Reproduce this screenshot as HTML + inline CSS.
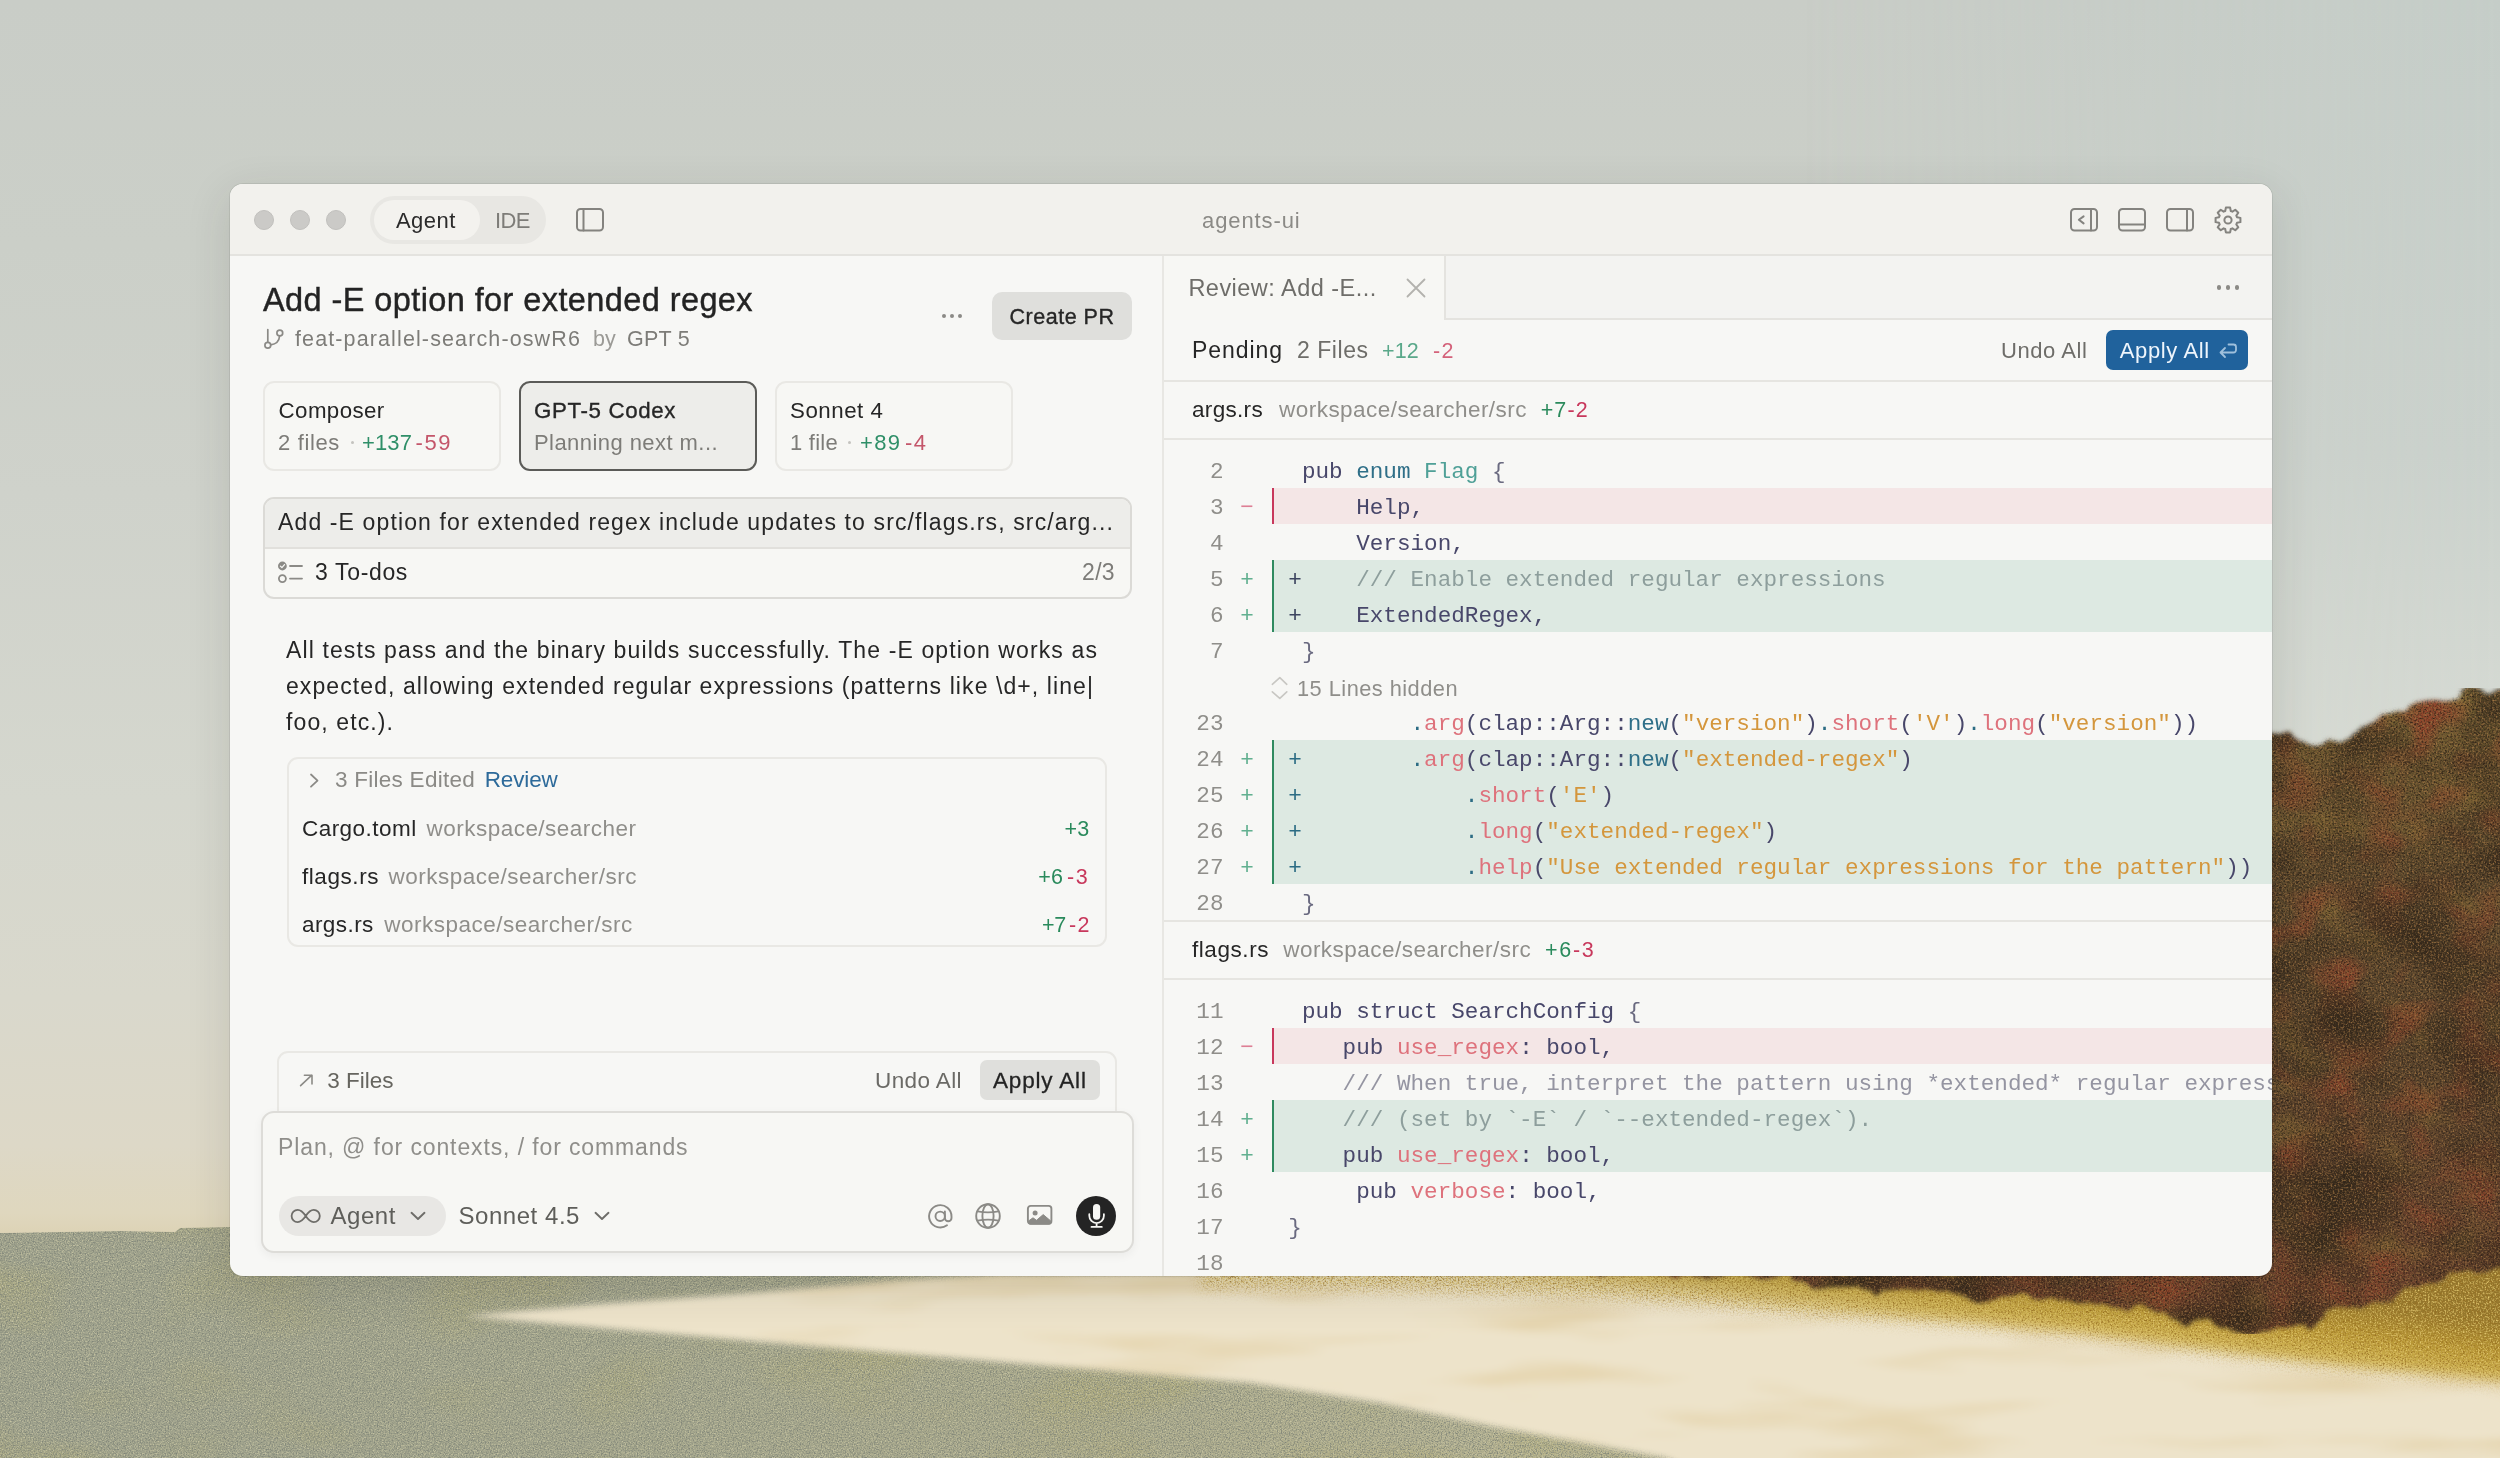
<!DOCTYPE html>
<html lang="en">
<head>
<meta charset="utf-8">
<title>agents-ui</title>
<style>
*{box-sizing:border-box;margin:0;padding:0}
html,body{width:2500px;height:1458px;overflow:hidden;background:#c9cdc6}
body{position:relative;font-family:"Liberation Sans",Arial,sans-serif;color:#262626}
.abs{position:absolute}
#bg{position:absolute;left:0;top:0;width:2500px;height:1458px}
#shadow{position:absolute;left:230px;top:184px;width:2042px;height:1092px;border-radius:13px;box-shadow:0 12px 44px 2px rgba(40,40,30,.12),0 0 0 1px rgba(0,0,0,.07)}
#win{position:absolute;left:230px;top:184px;width:2042px;height:1092px;border-radius:13px;background:#f7f7f5;overflow:hidden}
#pg{position:absolute;left:-230px;top:-184px;width:2500px;height:1458px;will-change:transform}
.t{position:absolute;white-space:pre;line-height:1}
.t b{font-weight:normal}
svg.ic{position:absolute;overflow:visible;fill:none;stroke:#84837f;stroke-width:2;stroke-linecap:round;stroke-linejoin:round}
.g{color:#2f8f68}.r{color:#c4566a}
</style>
</head>
<body>
<svg id="bg" viewBox="0 0 2500 1458" width="2500" height="1458" preserveAspectRatio="none">
<defs>
<linearGradient id="gsky" x1="0" y1="0" x2="0" y2="1232" gradientUnits="userSpaceOnUse">
<stop offset="0" stop-color="#c9cdc7"/><stop offset=".2" stop-color="#cbcfc8"/><stop offset=".4" stop-color="#cfd2cb"/><stop offset=".65" stop-color="#d5d7ce"/><stop offset=".81" stop-color="#d9d8cc"/><stop offset=".93" stop-color="#ddd8c7"/><stop offset=".985" stop-color="#dfd7be"/><stop offset="1" stop-color="#ddd3b6"/>
</linearGradient>
<linearGradient id="gskyr" x1="0" y1="0" x2="0" y2="760" gradientUnits="userSpaceOnUse">
<stop offset="0" stop-color="#c5cdc8"/><stop offset=".6" stop-color="#cad1cc"/><stop offset="1" stop-color="#d7dbd4"/>
</linearGradient>
<linearGradient id="gskyrm" x1="1800" y1="0" x2="2500" y2="0" gradientUnits="userSpaceOnUse">
<stop offset="0" stop-color="#fff" stop-opacity="0"/><stop offset="1" stop-color="#fff" stop-opacity="1"/>
</linearGradient>
<mask id="mr"><rect x="1800" y="0" width="700" height="800" fill="url(#gskyrm)"/></mask>
<linearGradient id="gsea" x1="0" y1="0" x2="2500" y2="0" gradientUnits="userSpaceOnUse">
<stop offset="0" stop-color="#9fa28d"/><stop offset=".25" stop-color="#a3a58c"/><stop offset=".45" stop-color="#abaa8b"/><stop offset=".62" stop-color="#b6b393"/><stop offset="1" stop-color="#bbb693"/>
</linearGradient>
<linearGradient id="gbush" x1="0" y1="690" x2="0" y2="1320" gradientUnits="userSpaceOnUse">
<stop offset="0" stop-color="#80703a"/><stop offset=".08" stop-color="#6e5a30"/><stop offset=".3" stop-color="#5c4a2e"/><stop offset=".6" stop-color="#57432c"/><stop offset=".85" stop-color="#61402c"/><stop offset="1" stop-color="#6c402c"/>
</linearGradient>
<linearGradient id="ggrass" x1="2272" y1="1292" x2="2262" y2="1372" gradientUnits="userSpaceOnUse">
<stop offset="0" stop-color="#94762c"/><stop offset=".4" stop-color="#b99733"/><stop offset=".72" stop-color="#d0b455"/><stop offset="1" stop-color="#e9dcb2"/>
</linearGradient>
<filter id="fgrain" color-interpolation-filters="sRGB" x="0" y="0" width="100%" height="100%">
<feTurbulence type="fractalNoise" baseFrequency=".75" numOctaves="2" seed="7" result="n"/>
<feColorMatrix in="n" type="matrix" values="0 0 0 0 .78  0 0 0 0 .77  0 0 0 0 .64  2.6 0 0 0 -1.15" result="lite"/>
<feColorMatrix in="n" type="matrix" values="0 0 0 0 .50  0 0 0 0 .52  0 0 0 0 .47  0 2.6 0 0 -1.12" result="dk"/>
<feTurbulence type="fractalNoise" baseFrequency=".006 .012" numOctaves="2" seed="3" result="b"/>
<feColorMatrix in="b" type="matrix" values="0 0 0 0 .70  0 0 0 0 .67  0 0 0 0 .42  1.6 0 0 0 -.80" result="oliv"/>
<feMerge result="m"><feMergeNode in="SourceGraphic"/><feMergeNode in="oliv"/><feMergeNode in="lite"/><feMergeNode in="dk"/></feMerge>
<feComposite in="m" in2="SourceGraphic" operator="in"/>
</filter>
<filter id="fbush" color-interpolation-filters="sRGB" x="0" y="0" width="100%" height="100%">
<feTurbulence type="fractalNoise" baseFrequency=".011 .013" numOctaves="3" seed="11" result="big"/>
<feColorMatrix in="big" type="matrix" values="0 0 0 0 .22  0 0 0 0 .17  0 0 0 0 .11  2.2 1.2 0 0 -1.4" result="dark"/>
<feTurbulence type="fractalNoise" baseFrequency=".022 .026" numOctaves="2" seed="23" result="mid"/>
<feColorMatrix in="mid" type="matrix" values="0 0 0 0 .56  0 0 0 0 .27  0 0 0 0 .17  0 2.4 1.2 0 -1.72" result="red"/>
<feColorMatrix in="mid" type="matrix" values="0 0 0 0 .52  0 0 0 0 .42  0 0 0 0 .2  2.2 0 0 0 -1.2" result="ochre"/>
<feTurbulence type="fractalNoise" baseFrequency=".55" numOctaves="2" seed="5" result="fine"/>
<feColorMatrix in="fine" type="matrix" values="0 0 0 0 .18  0 0 0 0 .13  0 0 0 0 .09  2.4 0 0 0 -1.0" result="fg"/>
<feColorMatrix in="fine" type="matrix" values="0 0 0 0 .62  0 0 0 0 .45  0 0 0 0 .26  0 2.4 0 0 -1.12" result="fl"/>
<feMerge result="m"><feMergeNode in="SourceGraphic"/><feMergeNode in="ochre"/><feMergeNode in="red"/><feMergeNode in="dark"/><feMergeNode in="fg"/><feMergeNode in="fl"/></feMerge>
<feComposite in="m" in2="SourceGraphic" operator="in"/>
</filter>
<filter id="fedge" color-interpolation-filters="sRGB" x="-5%" y="-5%" width="110%" height="110%">
<feTurbulence type="fractalNoise" baseFrequency=".03" numOctaves="3" seed="4" result="t"/>
<feDisplacementMap in="SourceGraphic" in2="t" scale="26" xChannelSelector="R" yChannelSelector="G" result="dm"/><feGaussianBlur in="dm" stdDeviation="2.2"/>
</filter>
<filter id="fsand" color-interpolation-filters="sRGB" x="0" y="0" width="100%" height="100%">
<feTurbulence type="fractalNoise" baseFrequency=".004 .03" numOctaves="3" seed="9" result="s"/>
<feColorMatrix in="s" type="matrix" values="0 0 0 0 .88  0 0 0 0 .80  0 0 0 0 .62  2.2 0 0 0 -1.1" result="st"/>
<feMerge result="m"><feMergeNode in="SourceGraphic"/><feMergeNode in="st"/></feMerge>
<feComposite in="m" in2="SourceGraphic" operator="in" result="c"/>
<feGaussianBlur in="c" stdDeviation="3"/>
</filter>
<filter id="fgrass" color-interpolation-filters="sRGB" x="-2%" y="-20%" width="104%" height="140%">
<feGaussianBlur in="SourceGraphic" stdDeviation="7" result="bl"/>
<feTurbulence type="fractalNoise" baseFrequency=".6" numOctaves="2" seed="15" result="n"/>
<feColorMatrix in="n" type="matrix" values="0 0 0 0 .58  0 0 0 0 .42  0 0 0 0 .12  2.4 0 0 0 -1.05" result="d"/>
<feColorMatrix in="n" type="matrix" values="0 0 0 0 .9  0 0 0 0 .8  0 0 0 0 .45  0 2.4 0 0 -1.1" result="l"/>
<feMerge result="m"><feMergeNode in="bl"/><feMergeNode in="d"/><feMergeNode in="l"/></feMerge>
<feComposite in="m" in2="bl" operator="in"/>
</filter>
<filter id="fblur6" color-interpolation-filters="sRGB"><feGaussianBlur stdDeviation="7"/></filter>
<filter id="fblur2" color-interpolation-filters="sRGB"><feGaussianBlur stdDeviation="2"/></filter>
</defs>
<rect width="2500" height="1458" fill="url(#gsky)"/>
<rect x="1800" width="700" height="800" fill="url(#gskyr)" mask="url(#mr)"/>
<!-- sea -->
<path d="M0 1233 L120 1231 L175 1232 L180 1228 L230 1227 L1400 1215 L2500 1215 V1458 H0Z" fill="url(#gsea)" filter="url(#fgrain)"/>
<!-- sand -->
<g filter="url(#fsand)">
<path d="M462 1316 L600 1304 L750 1293 L900 1280 L1000 1274 L2600 1262 V1560 H1900 L1665 1458 L1500 1428 L1380 1403 L1250 1383 L1000 1362 L750 1341 L600 1328Z" fill="#ede3ca"/>
</g>
<!-- grass -->
<g filter="url(#fgrass)">
<path d="M1200 1262 L2600 1236 V1392 L2500 1384 L2360 1372 L2220 1356 L2080 1337 L1940 1325 L1800 1315 L1700 1306 L1600 1298 L1400 1291 L1200 1288Z" fill="url(#ggrass)"/>
</g>
<!-- bush -->
<g filter="url(#fbush)">
<path filter="url(#fedge)" d="M1560 1268 L1750 1278 L1850 1288 L1950 1296 L2050 1300 L2150 1307 L2200 1324 L2250 1334 L2290 1330 L2330 1316 L2380 1303 L2420 1286 L2450 1275 L2500 1268 L2560 1266 V690 L2470 688 L2440 698 L2400 712 L2365 728 L2335 745 L2300 738 L2272 730 L2200 730 V1268Z" fill="url(#gbush)"/>
</g>
</svg>
<div id="shadow"></div>
<div id="win"><div id="pg">
<div class="abs" id="tbar" style="left:230px;top:184px;width:2042px;height:72px;background:#f2f1ed;border-bottom:2px solid #e4e3df"></div>
<div class="abs" style="left:254px;top:210px;width:20px;height:20px;border-radius:50%;background:#cbcac7;border:1px solid #c1c0bd"></div>
<div class="abs" style="left:290px;top:210px;width:20px;height:20px;border-radius:50%;background:#cbcac7;border:1px solid #c1c0bd"></div>
<div class="abs" style="left:326px;top:210px;width:20px;height:20px;border-radius:50%;background:#cbcac7;border:1px solid #c1c0bd"></div>
<div class="abs" id="seg" style="left:370px;top:196px;width:176px;height:48px;border-radius:24px;background:#e8e7e3"></div>
<div class="abs" id="segA" style="left:374px;top:200px;width:106px;height:40px;border-radius:20px;background:#f3f2ee"></div>
<div class="t" id="tAgent" style="top:210.30px;font-size:22px;color:#2b2b2b;left:396px;letter-spacing:0.45px;">Agent</div>
<div class="t" id="tIDE" style="top:210.30px;font-size:22px;color:#7d7c78;left:495px;letter-spacing:-0.6px;">IDE</div>
<svg class="ic" style="left:575px;top:207px;" width="30" height="26" viewBox="0 0 30 26"><rect x="2" y="2" width="26" height="21.5" rx="3.5"/><path d="M8.5 2V23.5"/></svg>
<div class="t" id="tTitle" style="top:210.30px;font-size:22px;color:#8b8a86;left:1202px;letter-spacing:0.9px;">agents-ui</div>
<svg class="ic" style="left:2069px;top:207px;" width="30" height="26" viewBox="0 0 30 26"><rect x="2" y="2" width="26" height="21.5" rx="3.5"/><path d="M22 2V23.5M14.600 9.400L9.900 12.800L14.600 16.400"/></svg>
<svg class="ic" style="left:2117px;top:207px;" width="30" height="26" viewBox="0 0 30 26"><rect x="2" y="2" width="26" height="21.5" rx="3.5"/><path d="M2 17.5H28"/></svg>
<svg class="ic" style="left:2165px;top:207px;" width="30" height="26" viewBox="0 0 30 26"><rect x="2" y="2" width="26" height="21.5" rx="3.5"/><path d="M22 2V23.5"/></svg>
<svg class="ic" style="left:2214px;top:206px;" width="28" height="28" viewBox="-14 -14 28 28"><circle r="3.6"/><path d="M-2.78 -8.98 L-2.13 -12.42 L2.13 -12.42 L2.78 -8.98 L4.39 -8.31 L7.27 -10.29 L10.29 -7.27 L8.31 -4.39 L8.98 -2.78 L12.42 -2.13 L12.42 2.13 L8.98 2.78 L8.31 4.39 L10.29 7.27 L7.27 10.29 L4.39 8.31 L2.78 8.98 L2.13 12.42 L-2.13 12.42 L-2.78 8.98 L-4.39 8.31 L-7.27 10.29 L-10.29 7.27 L-8.31 4.39 L-8.98 2.78 L-12.42 2.13 L-12.42 -2.13 L-8.98 -2.78 L-8.31 -4.39 L-10.29 -7.27 L-7.27 -10.29 L-4.39 -8.31Z"/></svg>
<div class="abs" style="left:1162px;top:256px;width:2px;height:1020px;background:#e8e7e3"></div>
<div class="t" id="lTitle" style="top:284.15px;font-size:32.5px;color:#232323;left:263px;letter-spacing:0.407px;-webkit-text-stroke:0.4px #232323;">Add -E option for extended regex</div>
<svg class="ic" style="left:262px;top:326px;stroke:#8b8a86;stroke-width:1.7" width="24" height="24" viewBox="0 0 24 24"><circle cx="5.800" cy="19.200" r="2.900"/><circle cx="17.800" cy="7" r="2.900"/><path d="M5.800 3.500V16.200M8.700 18.800C14 18.200 17.200 15 17.600 10"/></svg>
<div class="t" id="lBranch" style="top:329.05px;font-size:21.5px;color:#7d7c78;left:295px;letter-spacing:1.118px;">feat-parallel-search-oswR6</div>
<div class="t" id="lBy" style="top:329.05px;font-size:21.5px;color:#9b9a96;left:593px;letter-spacing:0.141px;">by</div>
<div class="t" id="lGpt" style="top:329.05px;font-size:21.5px;color:#7d7c78;left:627px;letter-spacing:0.25px;">GPT 5</div>
<div class="abs" style="left:941.7px;top:313.6px;width:4.6px;height:4.6px;border-radius:50%;background:#8b8a86"></div>
<div class="abs" style="left:949.7px;top:313.6px;width:4.6px;height:4.6px;border-radius:50%;background:#8b8a86"></div>
<div class="abs" style="left:957.9000000000001px;top:313.6px;width:4.6px;height:4.6px;border-radius:50%;background:#8b8a86"></div>
<div class="abs" style="left:992px;top:292px;width:140px;height:48px;border-radius:10px;background:#dfdfdc"></div>
<div class="t" id="lCreate" style="top:307.05px;font-size:21.5px;color:#262626;left:1009.5px;letter-spacing:0.514px;-webkit-text-stroke:0.35px #262626;">Create PR</div>
<div class="abs" style="left:263px;top:381px;width:238px;height:90px;border-radius:11px;background:#f7f7f4;border:2px solid #e9e8e4"></div>
<div class="abs" style="left:519px;top:381px;width:238px;height:90px;border-radius:11px;background:#ededea;border:2px solid #5b5b58"></div>
<div class="abs" style="left:775px;top:381px;width:238px;height:90px;border-radius:11px;background:#f7f7f4;border:2px solid #e9e8e4"></div>
<div class="t" id="c1a" style="top:400.35px;font-size:22.3px;color:#262626;left:278.6px;letter-spacing:0.393px;">Composer</div>
<div class="t" id="c1b" style="top:431.90px;font-size:22px;color:#7d7c78;left:278px;letter-spacing:0.645px;">2 files</div>
<div class="abs" style="left:350.5px;top:440.5px;width:3px;height:3px;border-radius:50%;background:#c4c3bf"></div>
<div class="t" id="c1c" style="top:431.90px;font-size:22px;color:#2f8f68;left:362px;letter-spacing:0.109px;">+137</div>
<div class="t" id="c1d" style="top:431.90px;font-size:22px;color:#c4566a;left:415.5px;letter-spacing:1.568px;">-59</div>
<div class="t" id="c2a" style="top:400.35px;font-size:22.3px;color:#262626;left:534px;letter-spacing:0.629px;-webkit-text-stroke:0.35px #262626;">GPT-5 Codex</div>
<div class="t" id="c2b" style="top:431.90px;font-size:22px;color:#7d7c78;left:534px;letter-spacing:0.438px;">Planning next m...</div>
<div class="t" id="c3a" style="top:400.35px;font-size:22.3px;color:#262626;left:790px;letter-spacing:0.529px;">Sonnet 4</div>
<div class="t" id="c3b" style="top:431.90px;font-size:22px;color:#7d7c78;left:790px;letter-spacing:0.253px;">1 file</div>
<div class="abs" style="left:848px;top:440.5px;width:3px;height:3px;border-radius:50%;background:#c4c3bf"></div>
<div class="t" id="c3c" style="top:431.90px;font-size:22px;color:#2f8f68;left:860px;letter-spacing:1.391px;">+89</div>
<div class="t" id="c3d" style="top:431.90px;font-size:22px;color:#c4566a;left:905px;letter-spacing:1.469px;">-4</div>
<div class="abs" style="left:263px;top:497px;width:869px;height:102px;border-radius:11px;background:#f7f7f4;border:2px solid #dbdad6;overflow:hidden"><div class="abs" style="left:0;top:0;width:100%;height:50px;background:#ededea;border-bottom:2px solid #e1e0dc"></div></div>
<div class="t" id="pTxt" style="top:510.80px;font-size:23px;color:#262626;left:278px;letter-spacing:1.125px;">Add -E option for extended regex include updates to src/flags.rs, src/arg...</div>
<svg class="ic" style="left:277px;top:559px;stroke:#8b8a86;stroke-width:1.8" width="28" height="28" viewBox="0 0 28 28"><circle cx="5.400" cy="7" r="4.400" fill="#8b8a86" stroke="none"/><path d="M3.400 7.100l1.500 1.500L7.500 5.600" stroke="#f7f7f4" stroke-width="1.300"/><circle cx="5.400" cy="19.600" r="3.500"/><path d="M13 7H25M13 19.600H25"/></svg>
<div class="t" id="pTodo" style="top:560.80px;font-size:23px;color:#262626;left:315px;letter-spacing:0.648px;">3 To-dos</div>
<div class="t" id="pCnt" style="top:560.80px;font-size:23px;color:#7d7c78;right:1385px;letter-spacing:0.339px;">2/3</div>
<div class="t" id="m1" style="top:639.30px;font-size:23px;color:#262626;left:286px;letter-spacing:1.118px;">All tests pass and the binary builds successfully. The -E option works as</div>
<div class="t" id="m2" style="top:675.30px;font-size:23px;color:#262626;left:286px;letter-spacing:1.082px;">expected, allowing extended regular expressions (patterns like \d+, line|</div>
<div class="t" id="m3" style="top:711.30px;font-size:23px;color:#262626;left:286px;letter-spacing:1.102px;">foo, etc.).</div>
<div class="abs" style="left:287px;top:757px;width:820px;height:190px;border-radius:11px;border:2px solid #e9e8e4"></div>
<svg class="ic" style="left:308px;top:772px;stroke:#8b8a86;stroke-width:1.8" width="14" height="18" viewBox="0 0 14 18"><path d="M3 2.5L9.5 8.6L3 14.7"/></svg>
<div class="t" id="fHead" style="top:769.05px;font-size:22.5px;color:#8b8a86;left:335px;letter-spacing:0.262px;">3 Files Edited</div>
<div class="t" id="fRev" style="top:769.05px;font-size:22.5px;color:#2d6a9a;left:484.7px;letter-spacing:-0.13px;">Review</div>
<div class="t" id="f1n" style="top:818.05px;font-size:22.5px;color:#262626;left:302px;letter-spacing:0.455px;">Cargo.toml</div>
<div class="t" id="f1p" style="top:818.05px;font-size:22.5px;color:#8f8e8a;left:426.5px;letter-spacing:0.481px;">workspace/searcher</div>
<div class="t" id="f1s" style="top:819.05px;font-size:21.5px;color:#262626;right:1410.5px;letter-spacing:0.242px;"><span style="color:#2a8a5c">+3</span></div>
<div class="t" id="f2n" style="top:866.05px;font-size:22.5px;color:#262626;left:302px;letter-spacing:0.559px;">flags.rs</div>
<div class="t" id="f2p" style="top:866.05px;font-size:22.5px;color:#8f8e8a;left:388.6px;letter-spacing:0.491px;">workspace/searcher/src</div>
<div class="t" id="f2s" style="top:867.05px;font-size:21.5px;color:#262626;left:1038.3px;letter-spacing:0.242px;"><span style="color:#2a8a5c">+6</span></div>
<div class="t" id="f2t" style="top:867.05px;font-size:21.5px;color:#262626;left:1067px;letter-spacing:1.688px;"><span style="color:#c8385c">-3</span></div>
<div class="t" id="f3n" style="top:913.55px;font-size:22.5px;color:#262626;left:302px;letter-spacing:0.433px;">args.rs</div>
<div class="t" id="f3p" style="top:913.55px;font-size:22.5px;color:#8f8e8a;left:384.3px;letter-spacing:0.491px;">workspace/searcher/src</div>
<div class="t" id="f3s" style="top:914.55px;font-size:21.5px;color:#262626;left:1042px;letter-spacing:-0.258px;"><span style="color:#2a8a5c">+7</span></div>
<div class="t" id="f3t" style="top:914.55px;font-size:21.5px;color:#262626;left:1069px;letter-spacing:1.438px;"><span style="color:#c8385c">-2</span></div>
<div class="abs" style="left:277px;top:1051px;width:840px;height:90px;border-radius:11px;border:2px solid #e9e8e4"></div>
<svg class="ic" style="left:297px;top:1071px;stroke:#8b8a86;stroke-width:1.600" width="18" height="18" viewBox="0 0 18 18"><path d="M3.600 14.600L14.800 4.200M7.400 4.200H15V13"/></svg>
<div class="t" id="bFiles" style="top:1070.05px;font-size:22.5px;color:#66655f;left:327.3px;letter-spacing:-0.012px;">3 Files</div>
<div class="t" id="bUndo" style="top:1070.05px;font-size:22.5px;color:#6b6a66;left:875px;letter-spacing:0.398px;">Undo All</div>
<div class="abs" style="left:980px;top:1060px;width:120px;height:40px;border-radius:7px;background:#dfdfdc"></div>
<div class="t" id="bApply" style="top:1070.05px;font-size:22.5px;color:#232323;left:993px;letter-spacing:0.832px;-webkit-text-stroke:0.3px #232323;">Apply All</div>
<div class="abs" style="left:261px;top:1110.5px;width:872.5px;height:142.5px;border-radius:13px;background:#f7f7f4;border:2px solid #dddcd8;box-shadow:0 3px 10px rgba(0,0,0,.05)"></div>
<div class="t" id="iPh" style="top:1135.60px;font-size:23px;color:#8f8e8a;left:278px;letter-spacing:0.883px;">Plan, @ for contexts, / for commands</div>
<div class="abs" style="left:278.5px;top:1196px;width:167px;height:40px;border-radius:20px;background:#e8e7e4"></div>
<svg class="ic" style="left:290.2px;top:1207.8px;stroke:#6e6d69;stroke-width:1.8" width="32" height="16" viewBox="0 0 32 16"><path d="M15.700 8C13 4 10.500 1.900 7.700 1.900a6.100 6.100 0 0 0 0 12.200c2.800 0 5.300-2.100 8-6.100s5.200-6.100 8-6.100a6.100 6.100 0 0 1 0 12.200c-2.800 0-5.300-2.100-8-6.100z"/></svg>
<div class="t" id="iAgent" style="top:1203.60px;font-size:24px;color:#5e5e5a;left:330.5px;letter-spacing:0.556px;">Agent</div>
<svg class="ic" style="left:410px;top:1211px;stroke:#6e6d69;stroke-width:1.9" width="16" height="10" viewBox="0 0 16 10"><path d="M1.5 1.800L8 8L14.500 1.800"/></svg>
<div class="t" id="iModel" style="top:1203.60px;font-size:24px;color:#5e5e5a;left:458.5px;letter-spacing:0.539px;">Sonnet 4.5</div>
<svg class="ic" style="left:594px;top:1211px;stroke:#6e6d69;stroke-width:1.9" width="16" height="10" viewBox="0 0 16 10"><path d="M1.5 1.800L8 8L14.500 1.800"/></svg>
<svg class="ic" style="left:927.7px;top:1203.6px;stroke:#8b8a86;stroke-width:1.9" width="25" height="25" viewBox="0 0 25 25"><circle cx="12.2" cy="12.300" r="4.700"/><path d="M16.900 7.400V14a3.300 3.300 0 0 0 6.600 0V12.500A11.200 11.200 0 1 0 19 21.300"/></svg>
<svg class="ic" style="left:975.1px;top:1202.8px;stroke:#8b8a86;stroke-width:1.9" width="26" height="26" viewBox="0 0 26 26"><circle cx="13" cy="13" r="11.800"/><ellipse cx="13" cy="13" rx="5.600" ry="11.800"/><path d="M2.600 8.300Q13 10.300 23.400 8.300M2.600 17.700Q13 15.700 23.400 17.700" stroke-width="1.700"/></svg>
<svg class="ic" style="left:1026.3px;top:1204.2px;stroke:#8b8a86;stroke-width:1.9" width="28" height="22" viewBox="0 0 28 22"><rect x="1.900" y="1.900" width="23.500" height="18" rx="2.800"/><circle cx="9.100" cy="8.900" r="2.500" fill="#8b8a86" stroke="none"/><path d="M2.500 17L7 13.800L10.500 16.300L17.200 10.600L24.800 17V18.500a1.500 1.500 0 0 1-1.500 1.500H4a1.500 1.500 0 0 1-1.500-1.500z" fill="#8b8a86" stroke-width="1"/></svg>
<div class="abs" style="left:1076px;top:1196px;width:40px;height:40px;border-radius:50%;background:#242424"></div>
<svg class="ic" style="left:1086px;top:1202px;stroke:#f7f7f4;stroke-width:1.8" width="20" height="28" viewBox="0 0 20 28"><rect x="7" y="2" width="7.200" height="15.800" rx="3.600" fill="#f7f7f4" stroke="none"/><path d="M3.300 12.200V13.800a7.300 7.300 0 0 0 14.600 0V12.200M10.600 21.200V24.600M5.500 24.900H15.800"/></svg>
<div class="abs" style="left:1164px;top:256px;width:1108px;height:64px;background:#f3f3f1;border-bottom:2px solid #e4e3df"></div>
<div class="abs" style="left:1164px;top:256px;width:282px;height:64px;background:#f7f7f4;border-right:2px solid #e4e3df"></div>
<div class="t" id="rTab" style="top:276.65px;font-size:23.5px;color:#6e6d69;left:1188.4px;letter-spacing:0.479px;">Review: Add -E...</div>
<svg class="ic" style="left:1406px;top:278px;stroke:#b3b2ae;stroke-width:1.8" width="20" height="20" viewBox="0 0 20 20"><path d="M1.500 1.500L18.500 18.500M18.500 1.500L1.500 18.500"/></svg>
<div class="abs" style="left:2216.7px;top:285.4px;width:4.6px;height:4.6px;border-radius:50%;background:#8b8a86"></div>
<div class="abs" style="left:2225.7px;top:285.4px;width:4.6px;height:4.6px;border-radius:50%;background:#8b8a86"></div>
<div class="abs" style="left:2234.7px;top:285.4px;width:4.6px;height:4.6px;border-radius:50%;background:#8b8a86"></div>
<div class="abs" style="left:1164px;top:380px;width:1108px;height:2px;background:#e6e5e1"></div>
<div class="t" id="rPend" style="top:339.30px;font-size:23px;color:#262626;left:1192px;letter-spacing:0.94px;">Pending</div>
<div class="t" id="rFiles" style="top:339.30px;font-size:23px;color:#6e6d69;left:1297px;letter-spacing:0.536px;">2 Files</div>
<div class="t" id="rAdd" style="top:341.05px;font-size:21.5px;color:#5aa88a;left:1382px;letter-spacing:0.172px;">+12</div>
<div class="t" id="rDel" style="top:341.05px;font-size:21.5px;color:#d4627a;left:1433px;letter-spacing:1.438px;">-2</div>
<div class="t" id="rUndo" style="top:340.10px;font-size:22px;color:#6e6d69;left:2001px;letter-spacing:0.556px;">Undo All</div>
<div class="abs" style="left:2106px;top:330px;width:142px;height:40px;border-radius:7px;background:#20629c"></div>
<div class="t" id="rApply" style="top:340.10px;font-size:22px;color:#eef5fc;left:2119.8px;letter-spacing:0.623px;">Apply All</div>
<svg class="ic" style="left:2218px;top:342px;stroke:#9fc0dc;stroke-width:1.8" width="20" height="17" viewBox="0 0 20 17"><path d="M10.500 2.500H15.500a2.500 2.500 0 0 1 2.500 2.500V8a2.500 2.500 0 0 1-2.500 2.500H2.800M7 6L2.500 10.500L7 15"/></svg>
<div class="abs" style="left:1164px;top:438px;width:1108px;height:2px;background:#e6e5e1"></div>
<div class="t" id="r1n" style="top:399.05px;font-size:22.5px;color:#262626;left:1192px;letter-spacing:0.319px;">args.rs</div>
<div class="t" id="r1p" style="top:399.05px;font-size:22.5px;color:#8f8e8a;left:1279px;letter-spacing:0.473px;">workspace/searcher/src</div>
<div class="t" id="r1s" style="top:400.05px;font-size:21.5px;color:#262626;left:1540.7px;letter-spacing:1.09px;"><span style="color:#2a8a5c">+7</span><span style="color:#c8385c">-2</span></div>
<div class="t" style="top:461.38px;font-size:22.646px;color:#8f8e8a;font-family:'Liberation Mono','DejaVu Sans Mono',monospace;right:1276.5px;">2</div>
<div class="t" style="top:461.38px;font-size:22.646px;color:#48476a;font-family:'Liberation Mono','DejaVu Sans Mono',monospace;left:1288.3px;"> <span style="color:#48476a">pub</span> <span style="color:#2f6f88">enum</span> <span style="color:#4fa097">Flag</span> <span style="color:#6a6a80">{</span></div>
<div class="abs" style="left:1272px;top:488px;width:2.2px;height:36px;background:#c8385c"></div>
<div class="abs" style="left:1274px;top:488px;width:998px;height:36px;background:#f4e6e6"></div>
<div class="t" style="top:497.38px;font-size:22.646px;color:#dd7f95;font-family:'Liberation Mono','DejaVu Sans Mono',monospace;left:1240.3px;">−</div>
<div class="t" style="top:497.38px;font-size:22.646px;color:#8f8e8a;font-family:'Liberation Mono','DejaVu Sans Mono',monospace;right:1276.5px;">3</div>
<div class="t" style="top:497.38px;font-size:22.646px;color:#48476a;font-family:'Liberation Mono','DejaVu Sans Mono',monospace;left:1288.3px;">     <span style="color:#48476a">Help,</span></div>
<div class="t" style="top:533.38px;font-size:22.646px;color:#8f8e8a;font-family:'Liberation Mono','DejaVu Sans Mono',monospace;right:1276.5px;">4</div>
<div class="t" style="top:533.38px;font-size:22.646px;color:#48476a;font-family:'Liberation Mono','DejaVu Sans Mono',monospace;left:1288.3px;">     <span style="color:#48476a">Version,</span></div>
<div class="abs" style="left:1272px;top:560px;width:2.2px;height:36px;background:#2f8a60"></div>
<div class="abs" style="left:1274px;top:560px;width:998px;height:36px;background:#dde9e2"></div>
<div class="t" style="top:569.38px;font-size:22.646px;color:#62b090;font-family:'Liberation Mono','DejaVu Sans Mono',monospace;left:1240.3px;">+</div>
<div class="t" style="top:569.38px;font-size:22.646px;color:#8f8e8a;font-family:'Liberation Mono','DejaVu Sans Mono',monospace;right:1276.5px;">5</div>
<div class="t" style="top:569.38px;font-size:22.646px;color:#48476a;font-family:'Liberation Mono','DejaVu Sans Mono',monospace;left:1288.3px;"><span style="color:#3d4560">+</span>    <span style="color:#8d9e9c">/// Enable extended regular expressions</span></div>
<div class="abs" style="left:1272px;top:596px;width:2.2px;height:36px;background:#2f8a60"></div>
<div class="abs" style="left:1274px;top:596px;width:998px;height:36px;background:#dde9e2"></div>
<div class="t" style="top:605.38px;font-size:22.646px;color:#62b090;font-family:'Liberation Mono','DejaVu Sans Mono',monospace;left:1240.3px;">+</div>
<div class="t" style="top:605.38px;font-size:22.646px;color:#8f8e8a;font-family:'Liberation Mono','DejaVu Sans Mono',monospace;right:1276.5px;">6</div>
<div class="t" style="top:605.38px;font-size:22.646px;color:#48476a;font-family:'Liberation Mono','DejaVu Sans Mono',monospace;left:1288.3px;"><span style="color:#3d4560">+</span>    <span style="color:#48476a">ExtendedRegex,</span></div>
<div class="t" style="top:641.38px;font-size:22.646px;color:#8f8e8a;font-family:'Liberation Mono','DejaVu Sans Mono',monospace;right:1276.5px;">7</div>
<div class="t" style="top:641.38px;font-size:22.646px;color:#48476a;font-family:'Liberation Mono','DejaVu Sans Mono',monospace;left:1288.3px;"> <span style="color:#6a6a80">}</span></div>
<svg class="ic" style="left:1271px;top:676px;stroke:#c8c7c3;stroke-width:1.600" width="18" height="24" viewBox="0 0 18 24"><path d="M1.300 8.300L8.800 1.700L15.800 8.300M1.300 15.800L8.800 22.400L15.800 15.800"/></svg>
<div class="t" id="rHid" style="top:677.60px;font-size:21.8px;color:#8f8e8a;left:1297px;letter-spacing:0.472px;">15 Lines hidden</div>
<div class="t" style="top:713.38px;font-size:22.646px;color:#8f8e8a;font-family:'Liberation Mono','DejaVu Sans Mono',monospace;right:1276.5px;">23</div>
<div class="t" style="top:713.38px;font-size:22.646px;color:#48476a;font-family:'Liberation Mono','DejaVu Sans Mono',monospace;left:1288.3px;">         <span style="color:#2c6c84">.</span><span style="color:#de727c">arg</span><span style="color:#48476a">(clap::Arg::</span><span style="color:#2f6f88">new</span><span style="color:#48476a">(</span><span style="color:#d4963c">"version"</span><span style="color:#48476a">)</span><span style="color:#2c6c84">.</span><span style="color:#de727c">short</span><span style="color:#48476a">(</span><span style="color:#d4963c">'V'</span><span style="color:#48476a">)</span><span style="color:#2c6c84">.</span><span style="color:#de727c">long</span><span style="color:#48476a">(</span><span style="color:#d4963c">"version"</span><span style="color:#48476a">))</span></div>
<div class="abs" style="left:1272px;top:740px;width:2.2px;height:36px;background:#2f8a60"></div>
<div class="abs" style="left:1274px;top:740px;width:998px;height:36px;background:#dde9e2"></div>
<div class="t" style="top:749.38px;font-size:22.646px;color:#62b090;font-family:'Liberation Mono','DejaVu Sans Mono',monospace;left:1240.3px;">+</div>
<div class="t" style="top:749.38px;font-size:22.646px;color:#8f8e8a;font-family:'Liberation Mono','DejaVu Sans Mono',monospace;right:1276.5px;">24</div>
<div class="t" style="top:749.38px;font-size:22.646px;color:#48476a;font-family:'Liberation Mono','DejaVu Sans Mono',monospace;left:1288.3px;"><span style="color:#2c6c84">+</span>        <span style="color:#2c6c84">.</span><span style="color:#de727c">arg</span><span style="color:#48476a">(clap::Arg::</span><span style="color:#2f6f88">new</span><span style="color:#48476a">(</span><span style="color:#d4963c">"extended-regex"</span><span style="color:#48476a">)</span></div>
<div class="abs" style="left:1272px;top:776px;width:2.2px;height:36px;background:#2f8a60"></div>
<div class="abs" style="left:1274px;top:776px;width:998px;height:36px;background:#dde9e2"></div>
<div class="t" style="top:785.38px;font-size:22.646px;color:#62b090;font-family:'Liberation Mono','DejaVu Sans Mono',monospace;left:1240.3px;">+</div>
<div class="t" style="top:785.38px;font-size:22.646px;color:#8f8e8a;font-family:'Liberation Mono','DejaVu Sans Mono',monospace;right:1276.5px;">25</div>
<div class="t" style="top:785.38px;font-size:22.646px;color:#48476a;font-family:'Liberation Mono','DejaVu Sans Mono',monospace;left:1288.3px;"><span style="color:#2c6c84">+</span>            <span style="color:#2c6c84">.</span><span style="color:#de727c">short</span><span style="color:#48476a">(</span><span style="color:#d4963c">'E'</span><span style="color:#48476a">)</span></div>
<div class="abs" style="left:1272px;top:812px;width:2.2px;height:36px;background:#2f8a60"></div>
<div class="abs" style="left:1274px;top:812px;width:998px;height:36px;background:#dde9e2"></div>
<div class="t" style="top:821.38px;font-size:22.646px;color:#62b090;font-family:'Liberation Mono','DejaVu Sans Mono',monospace;left:1240.3px;">+</div>
<div class="t" style="top:821.38px;font-size:22.646px;color:#8f8e8a;font-family:'Liberation Mono','DejaVu Sans Mono',monospace;right:1276.5px;">26</div>
<div class="t" style="top:821.38px;font-size:22.646px;color:#48476a;font-family:'Liberation Mono','DejaVu Sans Mono',monospace;left:1288.3px;"><span style="color:#2c6c84">+</span>            <span style="color:#2c6c84">.</span><span style="color:#de727c">long</span><span style="color:#48476a">(</span><span style="color:#d4963c">"extended-regex"</span><span style="color:#48476a">)</span></div>
<div class="abs" style="left:1272px;top:848px;width:2.2px;height:36px;background:#2f8a60"></div>
<div class="abs" style="left:1274px;top:848px;width:998px;height:36px;background:#dde9e2"></div>
<div class="t" style="top:857.38px;font-size:22.646px;color:#62b090;font-family:'Liberation Mono','DejaVu Sans Mono',monospace;left:1240.3px;">+</div>
<div class="t" style="top:857.38px;font-size:22.646px;color:#8f8e8a;font-family:'Liberation Mono','DejaVu Sans Mono',monospace;right:1276.5px;">27</div>
<div class="t" style="top:857.38px;font-size:22.646px;color:#48476a;font-family:'Liberation Mono','DejaVu Sans Mono',monospace;left:1288.3px;"><span style="color:#2c6c84">+</span>            <span style="color:#2c6c84">.</span><span style="color:#de727c">help</span><span style="color:#48476a">(</span><span style="color:#d4963c">"Use extended regular expressions for the pattern"</span><span style="color:#48476a">))</span></div>
<div class="t" style="top:893.38px;font-size:22.646px;color:#8f8e8a;font-family:'Liberation Mono','DejaVu Sans Mono',monospace;right:1276.5px;">28</div>
<div class="t" style="top:893.38px;font-size:22.646px;color:#48476a;font-family:'Liberation Mono','DejaVu Sans Mono',monospace;left:1288.3px;"> <span style="color:#6a6a80">}</span></div>
<div class="abs" style="left:1164px;top:920px;width:1108px;height:2px;background:#e6e5e1"></div>
<div class="abs" style="left:1164px;top:978px;width:1108px;height:2px;background:#e6e5e1"></div>
<div class="t" id="r2n" style="top:939.05px;font-size:22.5px;color:#262626;left:1192px;letter-spacing:0.559px;">flags.rs</div>
<div class="t" id="r2p" style="top:939.05px;font-size:22.5px;color:#8f8e8a;left:1283.2px;letter-spacing:0.473px;">workspace/searcher/src</div>
<div class="t" id="r2s" style="top:940.05px;font-size:21.5px;color:#262626;left:1545px;letter-spacing:1.715px;"><span style="color:#2a8a5c">+6</span><span style="color:#c8385c">-3</span></div>
<div class="t" style="top:1001.38px;font-size:22.646px;color:#8f8e8a;font-family:'Liberation Mono','DejaVu Sans Mono',monospace;right:1276.5px;">11</div>
<div class="t" style="top:1001.38px;font-size:22.646px;color:#48476a;font-family:'Liberation Mono','DejaVu Sans Mono',monospace;left:1288.3px;"> <span style="color:#48476a">pub struct SearchConfig</span> <span style="color:#6a6a80">{</span></div>
<div class="abs" style="left:1272px;top:1028px;width:2.2px;height:36px;background:#c8385c"></div>
<div class="abs" style="left:1274px;top:1028px;width:998px;height:36px;background:#f4e6e6"></div>
<div class="t" style="top:1037.38px;font-size:22.646px;color:#dd7f95;font-family:'Liberation Mono','DejaVu Sans Mono',monospace;left:1240.3px;">−</div>
<div class="t" style="top:1037.38px;font-size:22.646px;color:#8f8e8a;font-family:'Liberation Mono','DejaVu Sans Mono',monospace;right:1276.5px;">12</div>
<div class="t" style="top:1037.38px;font-size:22.646px;color:#48476a;font-family:'Liberation Mono','DejaVu Sans Mono',monospace;left:1288.3px;">    <span style="color:#48476a">pub </span><span style="color:#de727c">use_regex</span><span style="color:#48476a">: bool,</span></div>
<div class="t" style="top:1073.38px;font-size:22.646px;color:#8f8e8a;font-family:'Liberation Mono','DejaVu Sans Mono',monospace;right:1276.5px;">13</div>
<div class="t" style="top:1073.38px;font-size:22.646px;color:#48476a;font-family:'Liberation Mono','DejaVu Sans Mono',monospace;left:1288.3px;">    <span style="color:#9494a1">/// When true, interpret the pattern using *extended* regular expressions</span></div>
<div class="abs" style="left:1272px;top:1100px;width:2.2px;height:36px;background:#2f8a60"></div>
<div class="abs" style="left:1274px;top:1100px;width:998px;height:36px;background:#dde9e2"></div>
<div class="t" style="top:1109.38px;font-size:22.646px;color:#62b090;font-family:'Liberation Mono','DejaVu Sans Mono',monospace;left:1240.3px;">+</div>
<div class="t" style="top:1109.38px;font-size:22.646px;color:#8f8e8a;font-family:'Liberation Mono','DejaVu Sans Mono',monospace;right:1276.5px;">14</div>
<div class="t" style="top:1109.38px;font-size:22.646px;color:#48476a;font-family:'Liberation Mono','DejaVu Sans Mono',monospace;left:1288.3px;">    <span style="color:#8d9e9c">/// (set by `-E` / `--extended-regex`).</span></div>
<div class="abs" style="left:1272px;top:1136px;width:2.2px;height:36px;background:#2f8a60"></div>
<div class="abs" style="left:1274px;top:1136px;width:998px;height:36px;background:#dde9e2"></div>
<div class="t" style="top:1145.38px;font-size:22.646px;color:#62b090;font-family:'Liberation Mono','DejaVu Sans Mono',monospace;left:1240.3px;">+</div>
<div class="t" style="top:1145.38px;font-size:22.646px;color:#8f8e8a;font-family:'Liberation Mono','DejaVu Sans Mono',monospace;right:1276.5px;">15</div>
<div class="t" style="top:1145.38px;font-size:22.646px;color:#48476a;font-family:'Liberation Mono','DejaVu Sans Mono',monospace;left:1288.3px;">    <span style="color:#48476a">pub </span><span style="color:#de727c">use_regex</span><span style="color:#48476a">: bool,</span></div>
<div class="t" style="top:1181.38px;font-size:22.646px;color:#8f8e8a;font-family:'Liberation Mono','DejaVu Sans Mono',monospace;right:1276.5px;">16</div>
<div class="t" style="top:1181.38px;font-size:22.646px;color:#48476a;font-family:'Liberation Mono','DejaVu Sans Mono',monospace;left:1288.3px;">     <span style="color:#48476a">pub </span><span style="color:#de727c">verbose</span><span style="color:#48476a">: bool,</span></div>
<div class="t" style="top:1217.38px;font-size:22.646px;color:#8f8e8a;font-family:'Liberation Mono','DejaVu Sans Mono',monospace;right:1276.5px;">17</div>
<div class="t" style="top:1217.38px;font-size:22.646px;color:#48476a;font-family:'Liberation Mono','DejaVu Sans Mono',monospace;left:1288.3px;"><span style="color:#6a6a80">}</span></div>
<div class="t" style="top:1253.38px;font-size:22.646px;color:#8f8e8a;font-family:'Liberation Mono','DejaVu Sans Mono',monospace;right:1276.5px;">18</div>
</div></div>
</body>
</html>
